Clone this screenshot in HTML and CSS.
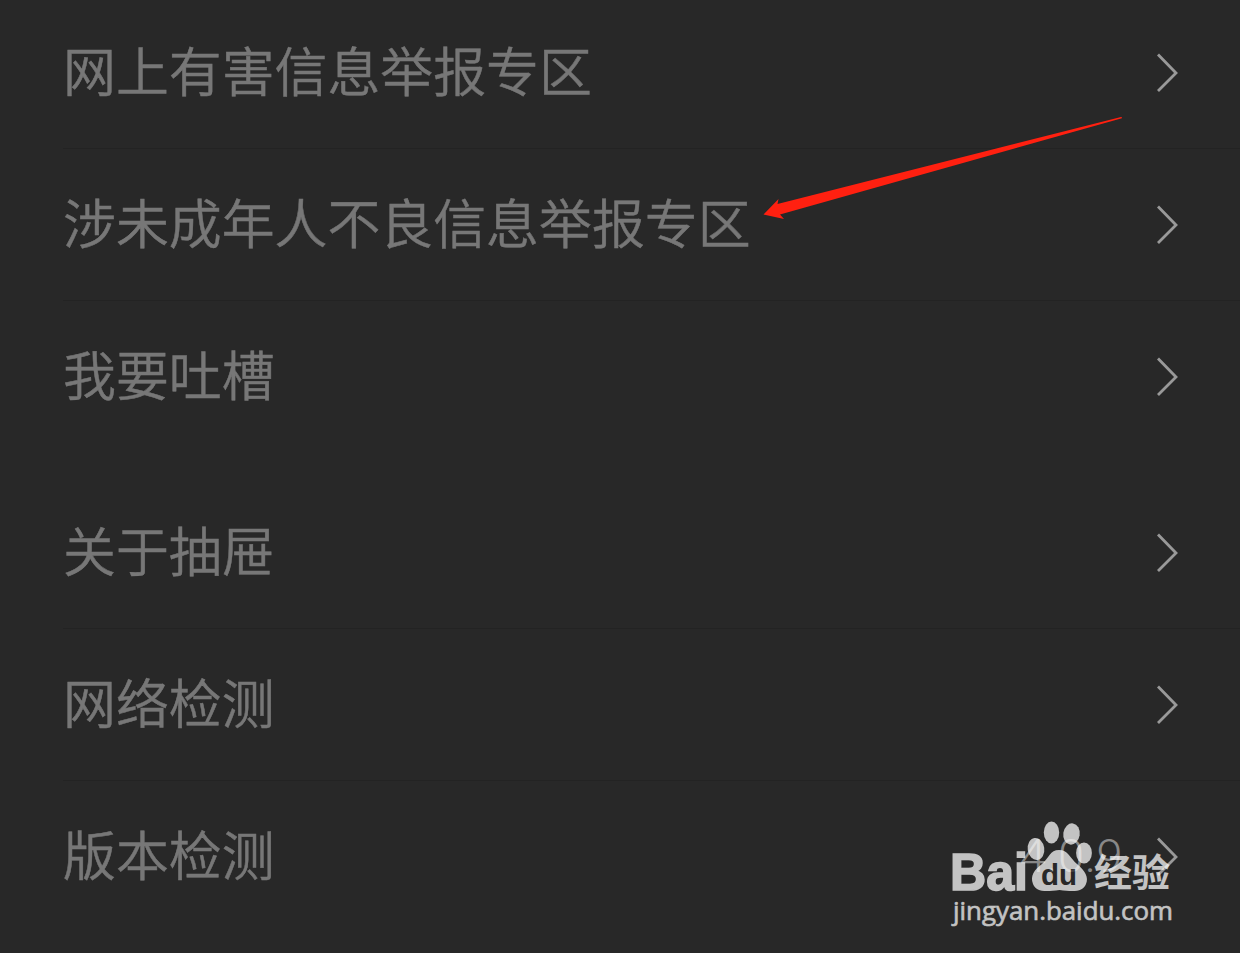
FILE: index.html
```html
<!DOCTYPE html>
<html lang="zh-CN">
  <head>
    <meta charset="UTF-8" />
    <meta name="viewport" content="width=device-width, initial-scale=1.0" />
    <title>设置</title>
    <link rel="stylesheet" href="styles.css">
  </head>
  <body>
    <main class="settings">
      <section class="group">
        <div class="row">
          <span class="label">网上有害信息举报专区</span>
          <svg class="chevron" viewBox="0 0 21 40"><path d="M1 1.5 L19 20 L1 38" /></svg>
        </div>
        <div class="row">
          <span class="label">涉未成年人不良信息举报专区</span>
          <svg class="chevron" viewBox="0 0 21 40"><path d="M1 1.5 L19 20 L1 38" /></svg>
        </div>
        <div class="row">
          <span class="label">我要吐槽</span>
          <svg class="chevron" viewBox="0 0 21 40"><path d="M1 1.5 L19 20 L1 38" /></svg>
        </div>
      </section>
      <section class="group">
        <div class="row">
          <span class="label">关于抽屉</span>
          <svg class="chevron" viewBox="0 0 21 40"><path d="M1 1.5 L19 20 L1 38" /></svg>
        </div>
        <div class="row">
          <span class="label">网络检测</span>
          <svg class="chevron" viewBox="0 0 21 40"><path d="M1 1.5 L19 20 L1 38" /></svg>
        </div>
        <div class="row">
          <span class="label">版本检测</span>
          <span class="version">4.0.9</span>
          <svg class="chevron" viewBox="0 0 21 40"><path d="M1 1.5 L19 20 L1 38" /></svg>
        </div>
      </section>
    </main>

    <svg class="arrow" viewBox="0 0 370 110">
      <path d="M3.5 104.5 L18.5 89 L17.5 94 L361 7 Q363 7.5 361 8.5 L20 104.5 L24 109 Z" />
    </svg>

    <svg class="watermark" viewBox="0 0 230 120">
      <text class="logo-text" x="10" y="79.500" textLength="78" lengthAdjust="spacingAndGlyphs">Bai</text>
      <g class="paw">
        <ellipse cx="111.5" cy="22.5" rx="7.7" ry="11" />
        <ellipse cx="131.5" cy="24" rx="8.2" ry="10.7" transform="rotate(8 131.5 24)" />
        <ellipse cx="96" cy="39" rx="8.3" ry="11" transform="rotate(-8 96 39)" />
        <ellipse cx="144" cy="43" rx="7.9" ry="10.5" />
        <path d="M119 40 C128 40 130 48 137 54 C145 61 149 67 146 74 C143 82 134 82 119.500 80 C105 82 96 82 93 74 C90 66 94 60 102 54 C109 48 110 40 119 40 Z" />
      </g>
      <text class="du" x="101" y="75" textLength="36" lengthAdjust="spacingAndGlyphs">du</text>
      <text class="jingyan" x="154" y="76" textLength="76" lengthAdjust="spacingAndGlyphs">经验</text>
      <text class="url" x="13" y="109.500" textLength="220" lengthAdjust="spacingAndGlyphs">jingyan.baidu.com</text>
    </svg>
  </body>
</html>
```

FILE: styles.css
```css
body {
  margin: 0;
  position: relative;
  height: 953px;
  overflow: hidden;
  background-color: #282828;
  color: #777;
  font-family: "Noto Sans CJK SC", sans-serif;
}
.settings {
  display: flex;
  flex-direction: column;
  gap: 24px;
  margin-top: -3px;
}
.group {
  margin-left: 63px;
}
.row {
  display: flex;
  align-items: center;
  box-sizing: border-box;
  height: 152px;
  padding-right: 62px;
  border-bottom: 1px solid #232323;
}
.row:last-child {
  border-bottom-color: transparent;
}
.label {
  flex: 1;
  padding-bottom: 8px;
  font-size: 52.9px;
  font-weight: 350;
  line-height: 76px;
  white-space: nowrap;
  -webkit-text-stroke: 0.5px #777;
}
.version {
  margin-right: 34px;
  padding-bottom: 2px;
  color: #888;
  font-family: Roboto, sans-serif;
  font-size: 47px;
  font-weight: 300;
  letter-spacing: 0.5px;
}
.chevron {
  width: 21px;
  height: 40px;
  fill: none;
  stroke: #999;
  stroke-width: 2.8;
}
.arrow {
  position: absolute;
  left: 760px;
  top: 110px;
  width: 370px;
  height: 110px;
  fill: #ff2010;
}
.watermark {
  position: absolute;
  left: 940px;
  top: 810px;
  width: 230px;
  height: 120px;
  overflow: visible;
  fill: #fff;
  opacity: 0.72;
}
.logo-text {
  font-family: "Liberation Sans", sans-serif;
  font-size: 52px;
  font-weight: bold;
  stroke: #fff;
  stroke-width: 1.6;
}
.du {
  fill: #282828;
  font-family: "Liberation Sans", sans-serif;
  font-size: 29px;
  font-weight: bold;
}
.jingyan {
  font-size: 38px;
  font-weight: 700;
}
.url {
  font-family: "Open Sans", sans-serif;
  font-size: 25px;
  font-weight: 500;
  stroke: #fff;
  stroke-width: 0.6;
}
```
